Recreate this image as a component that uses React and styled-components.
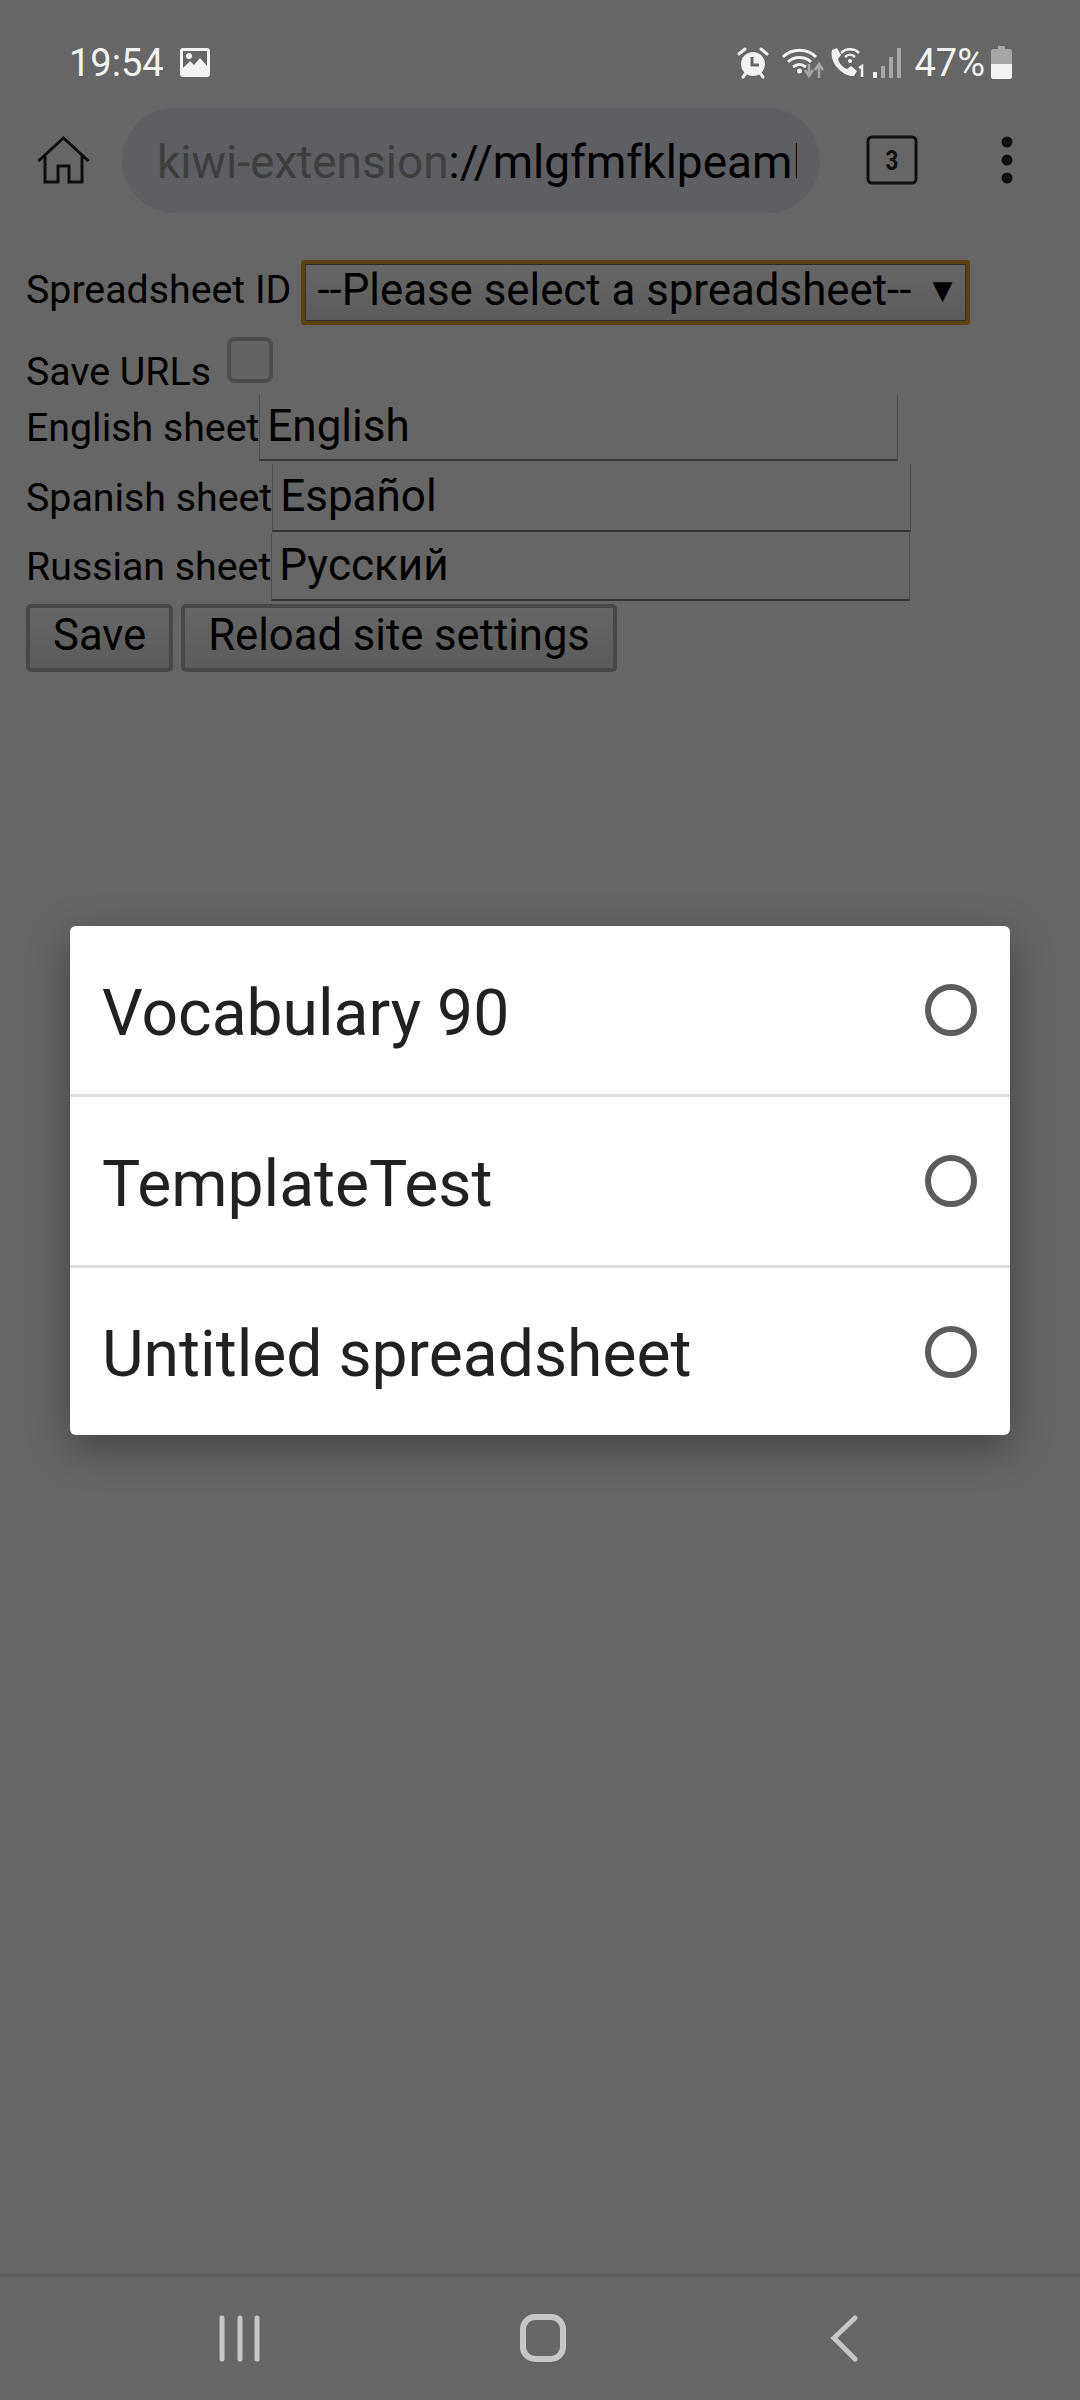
import React from "react"
import styled, { createGlobalStyle } from "styled-components"

const GlobalStyle = createGlobalStyle`
    html, body {
        margin: 0;
        padding: 0;
        background: #fff;
    }
    body {
        font-family: Roboto, "Liberation Sans", sans-serif;
    }
`

const Screen = styled.div`
    position: relative;
    width: 1080px;
    height: 2400px;
    display: flex;
    flex-direction: column;
    overflow: hidden;
    background: #fff;
    color: #000;
`
const StatusBar = styled.div`
    position: relative;
    z-index: 2;
    height: 92px;
    padding: 33px 68px 0 69px;
    box-sizing: border-box;
    display: flex;
    justify-content: space-between;
    align-items: center;
    color: #f2f2f2;
    font-size: 38px;
`
const StatusGroup = styled.div`
    display: flex;
    align-items: center;
`
const StatusIcon = styled.svg`
    display: block;
    flex: none;
    margin-left: ${(p) => p.$left || 0}px;
`
const Percent = styled.span`
    margin-left: 13px;
`
const Toolbar = styled.div`
    height: 136px;
    display: flex;
    align-items: center;
    padding-left: 37px;
    box-sizing: border-box;
`
const ToolIcon = styled.svg`
    display: block;
    flex: none;
    margin-left: ${(p) => p.$left || 0}px;
`
const UrlPill = styled.div`
    width: 698px;
    height: 105px;
    margin-left: 32px;
    padding: 4px 23px 0 35px;
    box-sizing: border-box;
    display: flex;
    align-items: center;
    border-radius: 53px;
    background: #e8edf7;
    font-size: 46px;
    overflow: hidden;
    white-space: nowrap;
`
const UrlClip = styled.div`
    width: 100%;
    overflow: hidden;
`
const UrlScheme = styled.span`
    color: #9c9c9c;
`
const Form = styled.div`
    padding: 32px 0 0 26px;
    font-size: 39.3px;
`
const SelectRow = styled.div`
    display: flex;
    align-items: center;
    gap: 10px;
    height: 65px;
`
const SelectLabel = styled.span`
    margin-bottom: 5px;
`
const FakeSelect = styled.div`
    width: 669px;
    height: 65px;
    padding: 0 14px 5px 12px;
    box-sizing: border-box;
    display: flex;
    align-items: center;
    justify-content: space-between;
    border: 4px solid #e6a32e;
    border-radius: 3px;
    box-shadow: inset 0 0 0 1px #777;
    background: linear-gradient(#ffffff, #e6e6e6);
    font-size: 43.8px;
    white-space: nowrap;
`
const Arrow = styled.span`
    font-family: "DejaVu Sans", sans-serif;
    font-size: 26px;
`
const CheckRow = styled.div`
    display: flex;
    align-items: flex-end;
    margin-top: 12px;
    height: 58px;
`
const Check = styled.div`
    width: 46px;
    height: 46px;
    margin: 0 0 12px 16px;
    box-sizing: border-box;
    border: 4px solid #c0c0c0;
    border-radius: 8px;
    background: #f8f8f8;
`
const SheetRow = styled.div`
    display: flex;
    align-items: center;
    height: ${(p) => p.$height || 68}px;
    margin-top: ${(p) => p.$top || 0}px;
`
const SheetInput = styled.div`
    width: 639px;
    height: 100%;
    padding: 0 0 2px 7px;
    box-sizing: border-box;
    display: flex;
    align-items: center;
    font-size: 44px;
    border-style: solid;
    border-color: #c4c4c4;
    border-width: 0 1px 2px 1px;
    border-bottom-color: #8a8a8a;
    white-space: nowrap;
`
const Buttons = styled.div`
    display: flex;
    gap: 8px;
    margin-top: 3px;
`
const Button = styled.button`
    height: 68px;
    padding: 0 23px 6px;
    box-sizing: border-box;
    border: 4px solid #b4b4b4;
    border-radius: 5px;
    background: linear-gradient(#ffffff, #e4e4e4);
    color: #000;
    font-family: inherit;
    font-size: 43.6px;
    white-space: nowrap;
`
const Spacer = styled.div`
    flex: 1;
`
const NavBar = styled.div`
    position: relative;
    z-index: 2;
    height: 126px;
    box-sizing: border-box;
    border-top: 3px solid #5b5b5b;
    background: #666;
`
const NavArt = styled.svg`
    display: block;
`
const Scrim = styled.div`
    position: absolute;
    inset: 0;
    z-index: 1;
    padding-top: 926px;
    box-sizing: border-box;
    display: flex;
    justify-content: center;
    align-items: flex-start;
    background: rgba(0, 0, 0, 0.6);
`
const Dialog = styled.div`
    width: 940px;
    background: #fff;
    border-radius: 6px;
    box-shadow: 0 12px 40px rgba(0, 0, 0, 0.35);
`
const Option = styled.div`
    height: 171px;
    padding: 5px 33px 0 32px;
    box-sizing: border-box;
    display: flex;
    align-items: center;
    justify-content: space-between;
    color: #212121;
    font-size: 64.2px;
    border-bottom: 3px solid #dfdfdf;

    &:last-child {
        height: 167px;
        border-bottom: 0;
    }
`
const Radio = styled.span`
    flex: none;
    width: 52px;
    height: 52px;
    margin-top: -5px;
    box-sizing: border-box;
    border: 6px solid #5c5c5c;
    border-radius: 50%;
`

const ImageIcon = () => (
    <StatusIcon $left={15} width="32" height="31" viewBox="0 0 32 31">
        <rect x="1" y="1" width="30" height="29" rx="3" fill="#f2f2f2" />
        <rect x="4" y="4" width="24" height="18" fill="#666" />
        <circle cx="10" cy="9" r="3" fill="#f2f2f2" />
        <path d="M4 21 L11 14 L15 18 L21 11 L28 19 V24 H4 Z" fill="#f2f2f2" />
    </StatusIcon>
)

const AlarmIcon = () => (
    <StatusIcon width="32" height="32" viewBox="0 0 32 32">
        <circle cx="16" cy="17" r="12" fill="#f2f2f2" />
        <path d="M15 10 V18 H22" fill="none" stroke="#666" strokeWidth="3" />
        <path d="M2 7 L8 2 M30 7 L24 2" stroke="#f2f2f2" strokeWidth="3" strokeLinecap="round" />
        <path d="M6 30 L9 26 M26 30 L23 26" stroke="#f2f2f2" strokeWidth="3" strokeLinecap="round" />
    </StatusIcon>
)

const WifiIcon = () => (
    <StatusIcon $left={13} width="42" height="32" viewBox="0 0 42 32">
        <g fill="none" stroke="#f2f2f2" strokeWidth="3">
            <path d="M1 10 C10 1 25 1 34 10" />
            <path d="M6 15 C12 9 23 9 29 15" />
            <path d="M11 20 C15 17 20 17 24 20" />
        </g>
        <circle cx="17.5" cy="24" r="2.5" fill="#f2f2f2" />
        <path d="M27 17 V27 M23 23 L27 29 L31 23" fill="none" stroke="#a6a6a6" strokeWidth="2.5" />
        <path d="M37 31 V20 M33 23 L37 17 L41 23" fill="none" stroke="#a6a6a6" strokeWidth="2.5" />
    </StatusIcon>
)

const CallIcon = () => (
    <StatusIcon $left={4} width="38" height="32" viewBox="0 0 38 32">
        <path d="M4 3 L9 1 L13 8 L10 12 C11 16 14 20 19 22 L23 19 L29 24 L26 29 C16 30 1 17 4 3 Z" fill="#f2f2f2" />
        <g fill="none" stroke="#f2f2f2" strokeWidth="2.5">
            <path d="M13 6 C18 1 26 1 31 6" />
            <path d="M17 10 C20 7 24 7 27 10" />
        </g>
        <circle cx="22" cy="14" r="2" fill="#f2f2f2" />
        <path d="M31 21 L34 19 V30" fill="none" stroke="#f2f2f2" strokeWidth="2.5" />
    </StatusIcon>
)

const SignalIcon = () => (
    <StatusIcon $left={7} width="28" height="30" viewBox="0 0 28 30">
        <rect x="0" y="24" width="4" height="6" fill="#f2f2f2" />
        <rect x="8" y="18" width="4" height="12" fill="#a6a6a6" />
        <rect x="16" y="9" width="4" height="21" fill="#a6a6a6" />
        <rect x="24" y="0" width="4" height="30" fill="#a6a6a6" />
    </StatusIcon>
)

const BatteryIcon = () => (
    <StatusIcon $left={6} width="21" height="33" viewBox="0 0 21 33">
        <path d="M7 0 H14 V3 H19 Q21 3 21 5 V18 H0 V5 Q0 3 2 3 H7 Z" fill="#a6a6a6" />
        <path d="M0 18 H21 V31 Q21 33 19 33 H2 Q0 33 0 31 Z" fill="#f2f2f2" />
    </StatusIcon>
)

const HomeIcon = () => (
    <ToolIcon width="53" height="48" viewBox="0 0 53 48">
        <path d="M1.5 25 L26.5 2 L51.5 25 M8 20 V46 H21 V30 H32 V46 H45 V20" fill="none" stroke="#262626" strokeWidth="3" />
    </ToolIcon>
)

const TabsIcon = () => (
    <ToolIcon $left={46} width="52" height="50" viewBox="0 0 52 50">
        <rect x="2" y="2" width="48" height="46" rx="4" fill="none" stroke="#262626" strokeWidth="3" />
        <text x="26" y="35" textAnchor="middle" fontFamily="Roboto, sans-serif" fontWeight="700" fontSize="28" fill="#262626" transform="translate(26 0) scale(0.8 1) translate(-26 0)">3</text>
    </ToolIcon>
)

const MenuIcon = () => (
    <ToolIcon $left={81} width="16" height="52" viewBox="0 0 16 52">
        <circle cx="8" cy="8" r="5.5" fill="#262626" />
        <circle cx="8" cy="26" r="5.5" fill="#262626" />
        <circle cx="8" cy="44" r="5.5" fill="#262626" />
    </ToolIcon>
)

const NavIcons = () => (
    <NavArt width="1080" height="123" viewBox="0 0 1080 123">
        <g stroke="#c6c6c6" strokeWidth="5" strokeLinecap="round" fill="none">
            <path d="M222 41 V82 M240 41 V82 M257 41 V82" />
            <rect x="523" y="40" width="40" height="42" rx="12" strokeWidth="6" />
            <path d="M855 41 L834 61 L855 82" />
        </g>
    </NavArt>
)

const OPTIONS = ["Vocabulary 90", "TemplateTest", "Untitled spreadsheet"]

const App = () => {
    return (
        <Screen>
            <GlobalStyle />
            <StatusBar>
                <StatusGroup>
                    <span>19:54</span>
                    <ImageIcon />
                </StatusGroup>
                <StatusGroup>
                    <AlarmIcon />
                    <WifiIcon />
                    <CallIcon />
                    <SignalIcon />
                    <Percent>47%</Percent>
                    <BatteryIcon />
                </StatusGroup>
            </StatusBar>
            <Toolbar>
                <HomeIcon />
                <UrlPill>
                    <UrlClip>
                        <UrlScheme>kiwi-extension</UrlScheme>://mlgfmfklpeaml
                    </UrlClip>
                </UrlPill>
                <TabsIcon />
                <MenuIcon />
            </Toolbar>
            <Form>
                <SelectRow>
                    <SelectLabel>Spreadsheet ID</SelectLabel>
                    <FakeSelect>
                        <span>--Please select a spreadsheet--</span>
                        <Arrow>▼</Arrow>
                    </FakeSelect>
                </SelectRow>
                <CheckRow>
                    <span>Save URLs</span>
                    <Check />
                </CheckRow>
                <SheetRow $height={66}>
                    <span>English sheet</span>
                    <SheetInput>English</SheetInput>
                </SheetRow>
                <SheetRow $top={3}>
                    <span>Spanish sheet</span>
                    <SheetInput>Español</SheetInput>
                </SheetRow>
                <SheetRow $top={1}>
                    <span>Russian sheet</span>
                    <SheetInput>Русский</SheetInput>
                </SheetRow>
                <Buttons>
                    <Button>Save</Button>
                    <Button>Reload site settings</Button>
                </Buttons>
            </Form>
            <Spacer />
            <NavBar>
                <NavIcons />
            </NavBar>
            <Scrim>
                <Dialog>
                    {OPTIONS.map((name) => (
                        <Option key={name}>
                            <span>{name}</span>
                            <Radio />
                        </Option>
                    ))}
                </Dialog>
            </Scrim>
        </Screen>
    )
}

export default App
